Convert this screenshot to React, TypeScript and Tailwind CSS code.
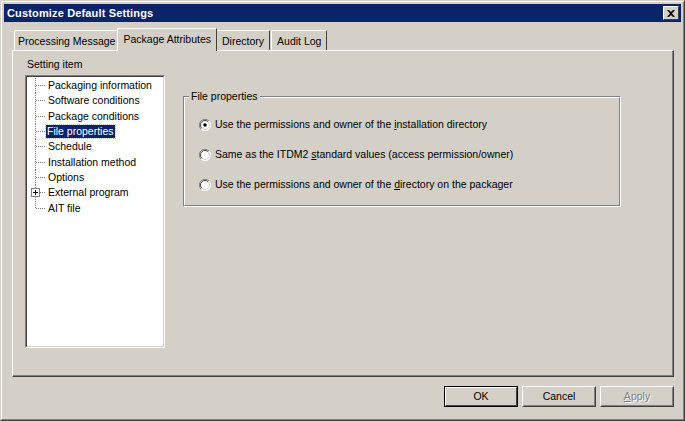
import React from "react";

const font = { fontFamily: '"Liberation Sans", Arial, sans-serif' };

function Radio({ checked }: { checked?: boolean }) {
  return (
    <svg width="12" height="12" viewBox="0 0 12 12" className="shrink-0">
      <circle cx="6" cy="6" r="5.5" fill="#ffffff" />
      <path d="M10 2 A5.5 5.5 0 0 0 2 10" stroke="#808080" strokeWidth="1" fill="none" />
      <path d="M9.2 2.8 A4.5 4.5 0 0 0 2.8 9.2" stroke="#404040" strokeWidth="1" fill="none" />
      <path d="M2 10 A5.5 5.5 0 0 0 10 2" stroke="#ffffff" strokeWidth="1" fill="none" />
      <path d="M2.8 9.2 A4.5 4.5 0 0 0 9.2 2.8" stroke="#d4d0c8" strokeWidth="1" fill="none" />
      {checked && <circle cx="6" cy="6" r="1.8" fill="#000000" />}
    </svg>
  );
}

function Connector({ last, plus }: { last?: boolean; plus?: boolean }) {
  return (
    <svg width="20" height="15" viewBox="0 0 20 15" className="shrink-0">
      <line x1="8.5" y1="0" x2="8.5" y2={last ? 8 : 15} stroke="#808080" strokeDasharray="1 1" />
      <line x1="9" y1="7.5" x2="19" y2="7.5" stroke="#808080" strokeDasharray="1 1" />
      {plus && (
        <g>
          <rect x="4.5" y="3.5" width="8" height="8" fill="#ffffff" stroke="#808080" />
          <line x1="6" y1="7.5" x2="11" y2="7.5" stroke="#000" />
          <line x1="8.5" y1="5" x2="8.5" y2="10" stroke="#000" />
        </g>
      )}
    </svg>
  );
}

const items = [
  "Packaging information",
  "Software conditions",
  "Package conditions",
  "File properties",
  "Schedule",
  "Installation method",
  "Options",
  "External program",
  "AIT file",
];

function Tab({ label, active, wide }: { label: string; active?: boolean; wide?: boolean }) {
  if (active) {
    return (
      <div className="relative z-10 -mb-[1px] h-[23px] self-end -mx-[2px] px-[5px] pt-[3px] bg-[#d4d0c8] border-t border-l border-r border-t-white border-l-white border-r-[#404040] text-[10.5px] text-black">
        {label}
      </div>
    );
  }
  return (
    <div
      className={
        "h-[20px] self-end pt-[3px] border-t border-l border-r border-t-white border-l-white border-r-[#404040] text-[10.5px] text-black " +
        (wide ? "px-[5px] ml-[1px]" : "px-[3px]")
      }
    >
      {label}
    </div>
  );
}

function Button({ children, def, disabled }: { children: React.ReactNode; def?: boolean; disabled?: boolean }) {
  return (
    <div
      className={
        "w-[74px] h-[21px] flex items-center justify-center text-[10.5px] border " +
        (def ? "border-black " : "border-t-white border-l-white border-r-[#404040] border-b-[#404040] ") +
        (disabled ? "text-[#808080] [text-shadow:1px_1px_0_#ffffff]" : "text-black")
      }
    >
      <div
        className={
          "w-full h-full flex items-center justify-center border " +
          (def ? "border-t-white border-l-white border-r-[#404040] border-b-[#404040]" : "border-t-[#d4d0c8] border-l-[#d4d0c8] border-r-[#808080] border-b-[#808080]")
        }
      >
        {children}
      </div>
    </div>
  );
}

export default function App() {
  return (
    <div style={font} className="w-[685px] h-[421px] bg-[#d4d0c8] overflow-hidden">
      <div className="w-[685px] h-[421px] border border-t-[#d4d0c8] border-l-[#d4d0c8] border-r-[#404040] border-b-[#404040]">
        <div className="w-full h-full border border-t-white border-l-white border-r-[#808080] border-b-[#808080] p-[2px] flex flex-col">
          {/* title bar */}
          <div className="h-[18px] bg-[#0a246a] flex items-center justify-between pl-[3px] pr-[2px]">
            <span className="text-white font-bold text-[11px] tracking-[0.15px]">Customize Default Settings</span>
            <div className="w-[16px] h-[14px] bg-[#d4d0c8] border border-t-white border-l-white border-r-[#404040] border-b-[#404040] flex items-center justify-center">
              <svg width="8" height="7" viewBox="0 0 8 7">
                <path d="M0 0 L2 0 L4 2 L6 0 L8 0 L5 3.5 L8 7 L6 7 L4 5 L2 7 L0 7 L3 3.5 Z" fill="#000" />
              </svg>
            </div>
          </div>

          {/* tabs + panel */}
          <div className="pt-[6px] pl-[8px] pr-[7px] flex flex-col">
            <div className="flex h-[22px] pl-[2px]">
              <Tab label="Processing Message" />
              <Tab label="Package Attributes" active />
              <Tab label="Directory" wide />
              <Tab label="Audit Log" wide />
            </div>
            <div className="h-[327px] border border-t-white border-l-white border-r-[#404040] border-b-[#404040]">
              <div className="w-full h-full border-r border-b border-r-[#808080] border-b-[#808080] flex pt-[7px] pl-[12px]">
                <div className="flex flex-col">
                  <div className="text-[10.5px] text-black leading-[13px] pl-[2px]">Setting item</div>
                  <div className="mt-[4px] w-[140px] h-[273px] bg-white border border-t-[#808080] border-l-[#808080] border-r-white border-b-white">
                    <div className="w-full h-full border border-t-[#404040] border-l-[#404040] border-r-[#d4d0c8] border-b-[#d4d0c8] pt-[1px] flex flex-col">
                      {items.map((it, i) => (
                        <div key={it} className="flex items-center h-[15.3px]">
                          <Connector last={i === items.length - 1} plus={it === "External program"} />
                          <span
                            className={
                              "text-[10.5px] leading-[13px] px-[1px] " +
                              (it === "File properties"
                                ? "bg-[#0a246a] text-white outline-1 outline-dotted outline-[#f0c040] -ml-[1px]"
                                : "text-black")
                            }
                          >
                            {it}
                          </span>
                        </div>
                      ))}
                    </div>
                  </div>
                </div>

                <div className="ml-[18px] mt-[38px] w-[438px] h-[111px] border border-t-[#808080] border-l-[#808080] border-r-white border-b-white relative">
                  <div className="w-full h-full border border-t-white border-l-white border-r-[#808080] border-b-[#808080] flex flex-col pl-[14px] pt-[20px] gap-[17px]">
                    <span className="absolute -top-[7px] left-[5px] bg-[#d4d0c8] px-[2px] text-[10.5px] leading-[13px] text-black">
                      File properties
                    </span>
                    <div className="flex items-center gap-[4px] text-[10.5px] leading-[13px] text-black">
                      <Radio checked />
                      <span>Use the permissions and owner of the <u>i</u>nstallation directory</span>
                    </div>
                    <div className="flex items-center gap-[4px] text-[10.5px] leading-[13px] text-black">
                      <Radio />
                      <span>Same as the ITDM2 <u>s</u>tandard values (access permission/owner)</span>
                    </div>
                    <div className="flex items-center gap-[4px] text-[10.5px] leading-[13px] text-black">
                      <Radio />
                      <span>Use the permissions and owner of the <u>d</u>irectory on the packager</span>
                    </div>
                  </div>
                </div>
              </div>
            </div>

            {/* buttons */}
            <div className="flex justify-end gap-[4px] mt-[9px]">
              <Button def>OK</Button>
              <Button>Cancel</Button>
              <Button disabled>
                <span><u>A</u>pply</span>
              </Button>
            </div>
          </div>
        </div>
      </div>
    </div>
  );
}
